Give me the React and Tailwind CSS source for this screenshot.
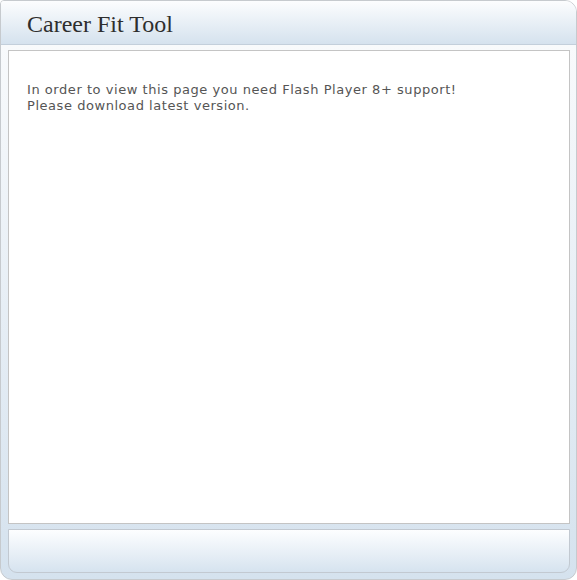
import React from "react";

export default function App() {
  return (
    <div className="w-[577px] h-[580px] bg-white">
      <div className="w-full h-full flex flex-col border border-[#c6cace] rounded-tl-[4px] rounded-tr-[12px] rounded-b-[12px] overflow-hidden bg-gradient-to-b from-[#fbfcfd] to-[#d5e2ee]">
        <div className="h-[44px] shrink-0 border-b border-[#c3cfdb] bg-gradient-to-b from-[#fcfdfe] to-[#d5e2ee] flex items-center pl-[26px]">
          <h1 className="text-[24px] leading-none text-[#2e2e2e] font-['Liberation_Serif',serif] pt-[2px]">
            Career Fit Tool
          </h1>
        </div>
        <div className="flex-1 flex flex-col pl-[7px] pr-[6px] pt-[5px] pb-[6px] gap-[5px]">
          <div className="flex-1 bg-white border border-[#c4c4c4] pl-[18px] pt-[31px]">
            <p className="text-[13px] leading-[16px] tracking-[0.55px] text-[#555] font-['DejaVu_Sans','Verdana',sans-serif]">
              In order to view this page you need Flash Player 8+ support!
              <br />
              Please download latest version.
            </p>
          </div>
          <div className="h-[44px] shrink-0 border border-[#c2c9d1] rounded-b-[9px] bg-gradient-to-b from-[#fdfeff] to-[#d6e3ef]" />
        </div>
      </div>
    </div>
  );
}
